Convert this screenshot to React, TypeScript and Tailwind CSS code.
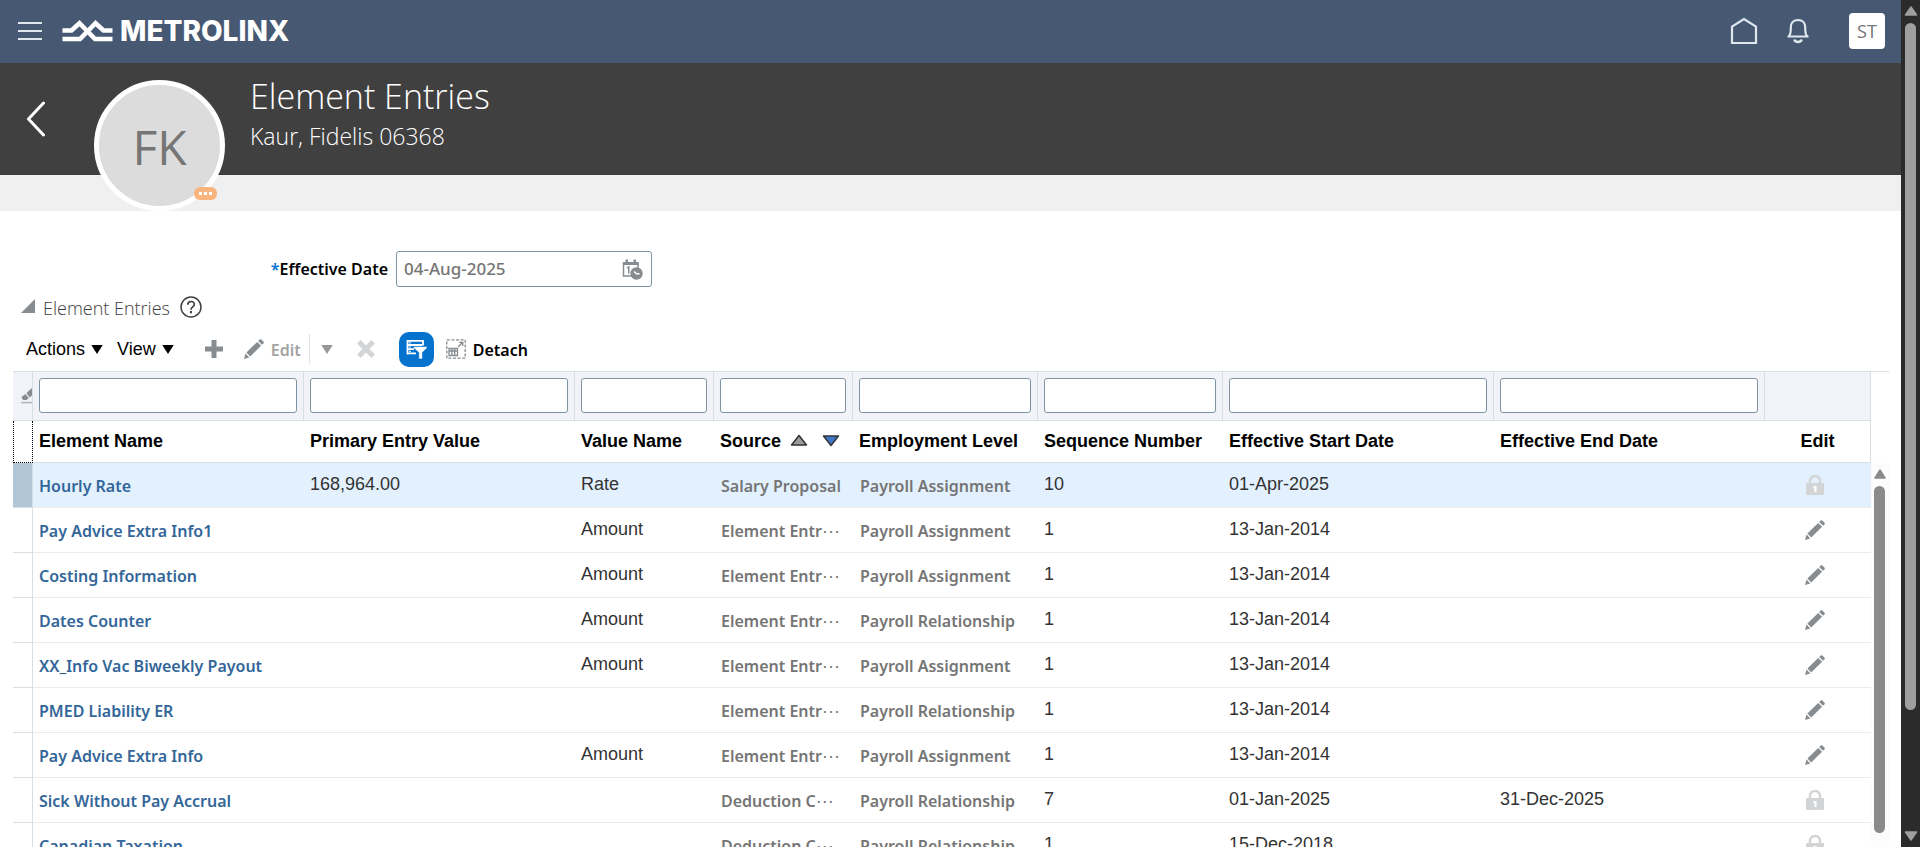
import type { ReactNode } from "react";

type Row = {
  name: string;
  value?: string;
  valueName?: string;
  source: string;
  cut?: boolean;
  level: string;
  seq: string;
  start: string;
  end?: string;
  locked?: boolean;
};

const rows: Row[] = [
  { name: "Hourly Rate", value: "168,964.00", valueName: "Rate", source: "Salary Proposal", level: "Payroll Assignment", seq: "10", start: "01-Apr-2025", locked: true },
  { name: "Pay Advice Extra Info1", valueName: "Amount", source: "Element Entr", cut: true, level: "Payroll Assignment", seq: "1", start: "13-Jan-2014" },
  { name: "Costing Information", valueName: "Amount", source: "Element Entr", cut: true, level: "Payroll Assignment", seq: "1", start: "13-Jan-2014" },
  { name: "Dates Counter", valueName: "Amount", source: "Element Entr", cut: true, level: "Payroll Relationship", seq: "1", start: "13-Jan-2014" },
  { name: "XX_Info Vac Biweekly Payout", valueName: "Amount", source: "Element Entr", cut: true, level: "Payroll Assignment", seq: "1", start: "13-Jan-2014" },
  { name: "PMED Liability ER", source: "Element Entr", cut: true, level: "Payroll Relationship", seq: "1", start: "13-Jan-2014" },
  { name: "Pay Advice Extra Info", valueName: "Amount", source: "Element Entr", cut: true, level: "Payroll Assignment", seq: "1", start: "13-Jan-2014" },
  { name: "Sick Without Pay Accrual", source: "Deduction C", cut: true, level: "Payroll Relationship", seq: "7", start: "01-Jan-2025", end: "31-Dec-2025", locked: true },
  { name: "Canadian Taxation", source: "Deduction C", cut: true, level: "Payroll Relationship", seq: "1", start: "15-Dec-2018", locked: true },
];

const filters = [
  "Element Name",
  "Primary Entry Value",
  "Value Name",
  "Source",
  "Employment Level",
  "Sequence Number",
  "Effective Start Date",
  "Effective End Date",
];

const sans = "font-['Open_Sans','Noto_Sans',sans-serif]";
const strong = "font-['Noto_Sans','Open_Sans',sans-serif] font-semibold";
const arial = "font-['Liberation_Sans',Arial,sans-serif]";
const plainCell = "border-[#ebebeb] pb-0.5";
const choiceCell = `${strong} border-[#ebebeb] pt-px text-base text-[#757575]`;

function Pencil() {
  return (
    <svg viewBox="0 0 20 20" className="block size-5" fill="#878c90" aria-hidden="true">
      <path d="M14.2 2 15.600.6Q16.500-.2 17.400.6L19.400 2.600Q20.200 3.500 19.400 4.400L18 5.800Z" />
      <path d="M13.200 2.900 17.100 6.800 6.200 17.400 2.400 13.600Z" />
      <path d="M1.500 14.600 5.300 18.400 0 20Z" />
    </svg>
  );
}

function Lock() {
  return (
    <svg viewBox="0 0 20 20" className="block size-5" aria-hidden="true">
      <path d="M5 9V6a5 5 0 0 1 10 0v3" fill="none" stroke="#d2d4d6" strokeWidth="2.4" />
      <rect x="1" y="8" width="18" height="12" rx="1" fill="#d2d4d6" />
      <path d="M8.500 11h3v6H9.500v-3.400h-1z" fill="#fff" />
    </svg>
  );
}

function Caret({ color }: { color: string }) {
  return (
    <svg viewBox="0 0 12 9" className="block h-[9px] w-3" fill={color} aria-hidden="true">
      <path d="M.3 0h11.4L6 9z" />
    </svg>
  );
}

function Th({ children, align = "text-left" }: { children?: ReactNode; align?: string }) {
  return (
    <th scope="col" className={`h-[42px] border-b border-[#d6dfe6] px-1.5 pb-0.5 font-bold whitespace-nowrap text-black ${align}`}>
      {children}
    </th>
  );
}

function TopBar() {
  return (
    <header className="flex h-[63px] items-center bg-[#465872] pr-4 pb-0.5 pl-[18px]">
      <button aria-label="Navigator" className="flex h-[18px] w-6 flex-col justify-between">
        <span className="h-[2px] w-full bg-[#dfe6ee]" />
        <span className="h-[2px] w-full bg-[#dfe6ee]" />
        <span className="h-[2px] w-full bg-[#dfe6ee]" />
      </button>
      <a href="#" aria-label="Metrolinx home" className="ml-5 flex items-center gap-[7px] text-white">
        <svg viewBox="0 0 51 22" className="h-[22px] w-[51px]" fill="none" stroke="#fff" strokeWidth="4.6" aria-hidden="true">
          <path d="M.5 10.5h9L17.5 3.2 33 19h17.500" />
          <path d="M50.500 10.500h-9L33.500 3.200 18 19H.5" />
        </svg>
        <span className="font-['Inter','Lato',sans-serif] text-[28px] leading-8 font-extrabold">METROLINX</span>
      </a>
      <nav className="ml-auto flex items-center">
        <button aria-label="Home">
          <svg viewBox="0 0 28 28" className="block size-7" fill="none" stroke="#dfe6ee" strokeWidth="2.2" aria-hidden="true">
            <path d="M2 26V9.500L14 2l12 7.500V26z" />
          </svg>
        </button>
        <button aria-label="Notifications" className="ml-7">
          <svg viewBox="0 0 24 26" className="block h-[26px] w-6" fill="none" stroke="#dfe6ee" strokeWidth="2.200" aria-hidden="true">
            <path d="M1.500 18.500h21M2.800 18.500C5 16 4.800 13 4.800 9.500 4.800 5 7.500 2 12 2s7.200 3 7.200 7.500c0 3.500-.2 6.500 2 9" />
            <path d="M8.300 21.500c.8 3.300 6.600 3.300 7.400 0" strokeWidth="2.600" />
          </svg>
        </button>
        <button className={`${sans} ml-[39px] size-9 rounded bg-white text-lg text-[#757575]`}>ST</button>
      </nav>
    </header>
  );
}

function PersonHeader() {
  return (
    <div className={`${sans} bg-linear-to-b from-[#404040] from-[112px] to-[#f0f0f0] to-[112px]`}>
      <div className="flex h-[148px] items-start pl-[26px]">
        <button aria-label="Back" className="mt-[38px]">
          <svg viewBox="0 0 20 36" className="block h-9 w-5" fill="none" stroke="#fff" strokeWidth="3" strokeLinecap="round" strokeLinejoin="round" aria-hidden="true">
            <path d="M17.500 2 2.500 18l15 16" />
          </svg>
        </button>
        <div className="relative mt-[17px] ml-12 flex size-[131px] items-center justify-center rounded-full border-[5px] border-white bg-[#dcdcdc]">
          <span className="pt-0.5 text-5xl font-normal text-[#757575]">FK</span>
          <button aria-label="More information" className="absolute right-[3px] bottom-[6px] flex h-[13px] w-[23px] items-center justify-center gap-0.5 rounded-md bg-[#fab47e]">
            <span className="size-[3px] bg-white" />
            <span className="size-[3px] bg-white" />
            <span className="size-[3px] bg-white" />
          </button>
        </div>
        <div className="ml-[25px] pt-2 font-light text-white">
          <h1 className="text-[34px] leading-[51px]">Element Entries</h1>
          <p className="text-[23px] leading-7">Kaur, Fidelis 06368</p>
        </div>
      </div>
    </div>
  );
}

function Toolbar() {
  return (
    <div className="flex h-10 items-center pl-[26px] text-lg">
      <button className={`${arial} flex items-center gap-1.5 text-black`}>
        Actions <Caret color="#000" />
      </button>
      <button className={`${arial} ml-3.5 flex items-center gap-1.5 text-black`}>
        View <Caret color="#000" />
      </button>
      <button aria-label="Add" className="ml-[31px]">
        <svg viewBox="0 0 18 18" className="block size-[18px]" fill="#878c90" aria-hidden="true">
          <path d="M6.500 0h5v6.500H18v5h-6.500V18h-5v-6.500H0v-5h6.500z" />
        </svg>
      </button>
      <button className={`${strong} ml-[21px] flex items-center gap-[7px] text-base text-[#a3a3a3]`}>
        <Pencil /> <span className="pt-0.5">Edit</span>
      </button>
      <span className="ml-2 h-[30px] w-px bg-[#dfe3e8]" />
      <button aria-label="Edit options" className="ml-[11px]">
        <Caret color="#979797" />
      </button>
      <button aria-label="Delete" className="ml-6">
        <svg viewBox="0 0 18 18" className="block size-[18px]" stroke="#d2d4d6" strokeWidth="5" aria-hidden="true">
          <path d="M1.800 1.800l14.400 14.400M16.200 1.800 1.800 16.200" />
        </svg>
      </button>
      <button aria-label="Query by example" className="ml-6 flex size-[35px] items-center justify-center rounded-[10px] bg-[#0572ce]">
        <svg viewBox="0 0 21 21" className="block size-[21px]" aria-hidden="true">
          <path d="M1 1.800h16v4.700M1.500 1v14.500M1 6h15M1 10.200h7M1 14.400h9" fill="none" stroke="#fff" strokeWidth="1.800" />
          <path d="M3 3.900h2M3 8.100h2M3 12.300h2" fill="none" stroke="#fff" strokeWidth="1" />
          <path d="M7.500 7.500H21v1.600l-4.600 4.500V20h-3.600v-6.400L7.500 9z" fill="#fff" stroke="#0572ce" strokeWidth=".6" />
        </svg>
      </button>
      <button className={`${strong} ml-3 flex items-center gap-[7px] text-base text-black`}>
        <svg viewBox="0 0 20 20" className="block size-5" fill="none" stroke="#878c90" strokeWidth="1.300" aria-hidden="true">
          <rect x=".8" y=".8" width="18.400" height="18.400" strokeDasharray="3 1.600" />
          <path d="M3 9.500h8.500v7H3zM3 12h8.500M5.900 9.500v7M8.700 9.500v7" />
          <path d="M12 8l4.500-4.500M13 3.300h3.800V7" />
        </svg>
        <span className="pt-0.5">Detach</span>
      </button>
    </div>
  );
}

function EntriesTable() {
  return (
    <div className="mr-3 ml-[13px] flex border-t border-[#d6dfe6]">
      <table className={`${arial} w-full min-w-0 flex-1 table-fixed border-separate border-spacing-0 text-lg leading-6 text-[#333]`}>
        <colgroup>
          <col className="w-5" />
          <col className="w-[271px]" />
          <col className="w-[271px]" />
          <col className="w-[139px]" />
          <col className="w-[139px]" />
          <col className="w-[185px]" />
          <col className="w-[185px]" />
          <col className="w-[271px]" />
          <col className="w-[271px]" />
          <col />
        </colgroup>
        <thead>
          <tr className="bg-[#f1f3f8]">
            <td className="h-[49px] border-r border-b border-[#d6dfe6]">
              <button aria-label="Clear filters" className="ml-2 block w-[11px] overflow-hidden">
                <svg viewBox="0 0 11 16" className="block h-4 w-[11px]" aria-hidden="true">
                  <path d="M5.500 5 11 0v7.500L8.500 9.600z" fill="#878c90" />
                  <path d="M1.200 8.600 4.500 6l3.200 4-2.200 2H2.500Q0 10.600 1.200 8.600z" fill="#878c90" />
                  <path d="M0 14.600h11" stroke="#b5b8bb" strokeWidth="1.600" />
                </svg>
              </button>
            </td>
            {filters.map((f) => (
              <td key={f} className="border-r border-b border-[#d6dfe6] px-1.5 pb-0.5 align-middle">
                <input aria-label={`Filter ${f}`} className="block h-[35px] w-full rounded-[3px] border border-[#7d95a3] bg-white px-2" />
              </td>
            ))}
            <td className="border-r border-b border-[#d6dfe6]" />
          </tr>
          <tr>
            <td className="border-r border-b border-l border-dotted border-black" />
            <Th>Element Name</Th>
            <Th>Primary Entry Value</Th>
            <Th>Value Name</Th>
            <Th>
              <span className="flex items-center">
                Source
                <button aria-label="Sort ascending" className="ml-[9px]">
                  <svg viewBox="0 0 18 13" className="block h-[13px] w-[18px]" aria-hidden="true">
                    <path d="M9 1.500 16.500 11h-15z" fill="#9b9b9b" stroke="#333" strokeWidth="1.500" strokeLinejoin="round" />
                  </svg>
                </button>
                <button aria-label="Sort descending" className="ml-3.5">
                  <svg viewBox="0 0 18 13" className="block h-[13px] w-[18px]" aria-hidden="true">
                    <path d="M9 11.500 16.500 2h-15z" fill="#4076c9" stroke="#333" strokeWidth="1.500" strokeLinejoin="round" />
                  </svg>
                </button>
              </span>
            </Th>
            <Th>Employment Level</Th>
            <Th>Sequence Number</Th>
            <Th>Effective Start Date</Th>
            <Th>Effective End Date</Th>
            <Th align="border-r text-center">Edit</Th>
          </tr>
        </thead>
        <tbody className="[&_td]:h-[45px] [&_td]:border-b [&_td]:whitespace-nowrap">
          {rows.map((r, i) => (
            <tr key={r.name} className={i === 0 ? "bg-[#e3f1ff]" : "bg-white"}>
              <td className={i === 0 ? "border-r border-[#d6dfe6] bg-[#b3c6d6]" : "border-r border-[#d6dfe6]"} />
              <td className={`${strong} border-[#ebebeb] px-1.5 pt-px text-base`}>
                <a href="#" className="text-[#336699]">
                  {r.name}
                </a>
              </td>
              <td className={`${plainCell} px-1.5`}>{r.value}</td>
              <td className={`${plainCell} px-1.5`}>{r.valueName}</td>
              <td className={`${choiceCell} px-[7px]`}>
                {r.source}
                {r.cut && <span className={`${arial} text-lg leading-4 font-normal`}>···</span>}
              </td>
              <td className={`${choiceCell} px-[7px]`}>{r.level}</td>
              <td className={`${plainCell} px-1.5`}>{r.seq}</td>
              <td className={`${plainCell} px-1.5`}>{r.start}</td>
              <td className={`${plainCell} px-1.5`}>{r.end}</td>
              <td className="border-[#ebebeb] pr-1.5">
                <button aria-label={r.locked ? "Locked" : `Edit ${r.name}`} disabled={r.locked} className="mx-auto block">
                  {r.locked ? <Lock /> : <Pencil />}
                </button>
              </td>
            </tr>
          ))}
        </tbody>
      </table>
      <div className="flex w-[18px] flex-col pt-[91px]" aria-hidden="true">
        <div className="flex flex-1 flex-col items-center bg-[#fcfcfc] pt-1.5 pr-px">
          <svg viewBox="0 0 12 10" className="mb-[7px] block h-[10px] w-3" fill="#8a8a8a">
            <path d="M6 1 11 9H1z" stroke="#8a8a8a" strokeWidth="1.500" strokeLinejoin="round" />
          </svg>
          <div className="mb-[35px] w-[11px] flex-1 rounded-full bg-[#8a8a8a]" />
        </div>
      </div>
    </div>
  );
}

export default function App() {
  return (
    <div className="flex h-screen overflow-hidden bg-white">
      <div className="min-w-0 flex-1 overflow-hidden">
        <TopBar />
        <PersonHeader />
        <main>
          <div className="flex items-center pt-10 pl-[268px]">
            <label htmlFor="effective-date" className={`${strong} w-[120px] text-right text-base whitespace-nowrap text-black`}>
              <span className="text-[#0572ce]">*</span>Effective Date
            </label>
            <div className="ml-2 flex h-9 w-64 items-center rounded-[3px] border border-[#7d95a3] bg-white pr-2 pl-[7px]">
              <input id="effective-date" defaultValue="04-Aug-2025" className="min-w-0 flex-1 font-['Noto_Sans','Open_Sans',sans-serif] text-[17px] font-medium text-[#757575] outline-none" />
              <button aria-label="Select date">
                <svg viewBox="0 0 21 21" className="block size-[21px]" aria-hidden="true">
                  <path d="M9 17H1.500V4h14.500v5" fill="none" stroke="#878c90" strokeWidth="1.500" />
                  <path d="M1 3h15.500v3H1zM3.500 .5h2.500V4H3.500zM11.500 .5H14V4h-2.500z" fill="#878c90" />
                  <path d="M5 9.200 6.800 8v6.500" fill="none" stroke="#878c90" strokeWidth="1.500" />
                  <circle cx="14.500" cy="14.500" r="6.200" fill="#878c90" />
                  <path d="M12 12.500l2.500 2.300h3" fill="none" stroke="#fff" strokeWidth="1.400" />
                </svg>
              </button>
            </div>
          </div>
          <div className={`${sans} mt-1.5 flex h-[30px] items-center pl-[21px]`}>
            <button aria-label="Collapse section" className="pb-1">
              <svg viewBox="0 0 14 14" className="block size-3.5" fill="#878c90" aria-hidden="true">
                <path d="M14 0v14H0z" />
              </svg>
            </button>
            <h2 className="ml-2 text-lg leading-7 font-light text-[#404040]">Element Entries</h2>
            <button aria-label="Help" className="ml-2.5 pb-0.5">
              <svg viewBox="0 0 22 22" className="block size-[22px]" fill="none" stroke="#404040" strokeWidth="1.500" aria-hidden="true">
                <circle cx="11" cy="11" r="10" />
                <path d="M7.800 8.800C7.800 4.400 14.300 4.600 14.300 8.300c0 2.600-3.300 2.600-3.300 5.400" strokeWidth="1.700" />
                <path d="M11 15v2.200" strokeWidth="2" />
              </svg>
            </button>
          </div>
          <div className="pt-1.5 pb-0.5">
            <Toolbar />
          </div>
          <EntriesTable />
        </main>
      </div>
      <div className="flex w-[19px] flex-col items-center bg-[#2b2b2b] py-1.5" aria-hidden="true">
        <svg viewBox="0 0 14 10" className="block h-[10px] w-3.5" fill="#9f9f9f" stroke="#9f9f9f" strokeWidth="1.500" strokeLinejoin="round">
          <path d="M7 1 12.500 9h-11z" />
        </svg>
        <div className="mt-[7px] flex w-[11px] flex-1 flex-col">
          <div className="h-[85%] rounded-full bg-[#9f9f9f]" />
        </div>
        <svg viewBox="0 0 14 10" className="block h-[10px] w-3.5" fill="#9f9f9f" stroke="#9f9f9f" strokeWidth="1.500" strokeLinejoin="round">
          <path d="M7 9 12.500 1h-11z" />
        </svg>
      </div>
    </div>
  );
}
